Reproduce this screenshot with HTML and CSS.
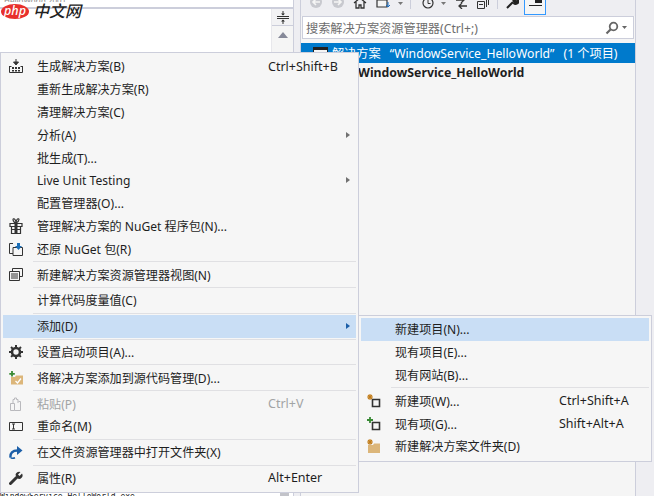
FILE: index.html
```html
<!DOCTYPE html>
<html lang="zh-CN">
<head>
<meta charset="utf-8">
<title>解决方案资源管理器</title>
<link rel="stylesheet" href="styles.css">
</head>
<body>
<div class="stage">
  <div class="left-pane">
    <div class="doc-top"><span class="top-clip">HelloWorld.2001</span></div>
    <div class="doc-body">
      <div class="doc-white"></div>
      <div class="vscroll">
        <div class="split"><svg width="12" height="13" viewBox="0 0 12 13"><path d="M0 5.500h12M0 7.500h12" stroke="#333" fill="none"/><path d="M6 0v4M6 9v4" stroke="#333"/><path d="M6 4.500L4 2.500h4zM6 8.500l-2 2h4z" fill="#333"/></svg></div>
        <div class="up"><svg width="10" height="6" viewBox="0 0 10 6"><path d="M5 0l5 6H0z" fill="#868999"/></svg></div>
      </div>
    </div>
    <div class="bottom-strip">
      <span class="clip-text">WindowService_HelloWorld.exe</span>
      <span class="thumb"></span>
    </div>
  </div>

  <div class="right-pane">
    <div class="toolbar">
      <svg class="tb" width="14" height="14" viewBox="0 0 14 14"><circle cx="7" cy="7" r="6" fill="#c8c9cf"/><path d="M11 7H4M7 4L4 7l3 3" stroke="#f5f5f5" stroke-width="1.600" fill="none"/></svg>
      <svg class="tb g8" width="14" height="14" viewBox="0 0 14 14"><circle cx="7" cy="7" r="6" fill="#c8c9cf"/><path d="M3 7h7M7 4l3 3-3 3" stroke="#f5f5f5" stroke-width="1.600" fill="none"/></svg>
      <svg class="tb g8" width="14" height="12" viewBox="0 0 14 12"><path d="M1 6l6-5 6 5M3 5v6h3V8h2v3h3V5" stroke="#333" stroke-width="1.300" fill="none"/></svg>
      <svg class="tb g9" width="15" height="12" viewBox="0 0 15 12"><path d="M1 1h10v9H1zM1 3h10" stroke="#333" stroke-width="1.200" fill="#f5f5f5"/><path d="M12 5v5M10 8l2 2 2-2" stroke="#1b6ec2" fill="none"/></svg>
      <svg class="tb caret g7" width="5" height="3" viewBox="0 0 5 3"><path d="M0 0h5L2.500 3z" fill="#777"/></svg>
      <span class="tb-sep g7"></span>
      <svg class="tb g12" width="12" height="12" viewBox="0 0 12 12"><circle cx="6" cy="6" r="5" stroke="#333" fill="none" stroke-width="1.200"/><path d="M6 3v3.500h2.500" stroke="#333" fill="none"/></svg>
      <svg class="tb caret g7" width="5" height="3" viewBox="0 0 5 3"><path d="M0 0h5L2.500 3z" fill="#777"/></svg>
      <svg class="tb g9" width="13" height="12" viewBox="0 0 13 12"><path d="M1 3h8M6 0l3 3-3 3M12 9H4M7 6L4 9l3 3" stroke="#333" fill="none" stroke-width="1.300"/></svg>
      <svg class="tb g9" width="12" height="9" viewBox="0 0 12 9"><path d="M.5 1.500h7v7h-7zM2 4.500h4M9.500 0v7M11.500 0v5" stroke="#333" fill="none"/></svg>
      <span class="tb-sep g8"></span>
      <svg class="tb g8" width="13" height="12" viewBox="0 0 13 12"><path d="M1 11l6-6M6 2.500a3 3 0 0 1 5-1L9 3.500l.5 1 1 .5 2-2a3 3 0 0 1-5 3" stroke="#222" stroke-width="2" fill="#222"/></svg>
      <span class="tb-active"><span class="pin"></span></span>
    </div>
    <div class="search">
      <span class="search-text">搜索解决方案资源管理器(Ctrl+;)</span>
      <svg width="14" height="14" viewBox="0 0 14 14"><circle cx="8.500" cy="5.500" r="3.800" stroke="#666" stroke-width="1.800" fill="none"/><path d="M6 8l-4.500 4.500" stroke="#666" stroke-width="2.200"/></svg>
      <svg width="5" height="3" viewBox="0 0 5 3"><path d="M0 0h5L2.500 3z" fill="#666"/></svg>
    </div>
    <div class="tree">
      <div class="sel-row"><span class="sol-icon"></span><span>解决方案<span class="qt">“WindowService_HelloWorld”</span>(1 个项目)</span></div>
      <div class="proj-row">WindowService_HelloWorld</div>
    </div>
  </div>
  <div class="edge"></div>

  <div class="logo"><span class="php">php</span><span class="cn">中文网</span></div>

  <div class="menu main-menu">
    <div class="item"><span class="ic"><svg width="14" height="14" viewBox="0 0 14 14"><path d="M7 0v5M4.500 3L7 6l2.500-3z" stroke="#333" fill="#333"/><path d="M.5 7.500h2M11.500 7.500h2M.5 7v6.500h13V7" stroke="#333" fill="none"/><path d="M3 8h2v2H3zM6 8h2v2H6zM9 8h2v2H9zM3 11h2v1.500H3zM6 11h2v1.500H6zM9 11h2v1.500H9z" fill="#333"/></svg></span><span class="lb">生成解决方案(B)</span><span class="sc">Ctrl+Shift+B</span></div>
    <div class="item"><span class="ic"></span><span class="lb">重新生成解决方案(R)</span></div>
    <div class="item"><span class="ic"></span><span class="lb">清理解决方案(C)</span></div>
    <div class="item"><span class="ic"></span><span class="lb">分析(A)</span><span class="sc"></span><span class="arr"></span></div>
    <div class="item"><span class="ic"></span><span class="lb">批生成(T)...</span></div>
    <div class="item"><span class="ic"></span><span class="lb">Live Unit Testing</span><span class="sc"></span><span class="arr"></span></div>
    <div class="item"><span class="ic"></span><span class="lb">配置管理器(O)...</span></div>
    <div class="item"><span class="ic"><svg width="14" height="16" viewBox="0 0 14 16"><path d="M1 5.500h12v3H1zM2.500 8.500h9v7h-9zM4 1.500c0-1.500 3-1 3 3.500 0-4.500 3-5 3-3.500S8 4.500 7 5 4 3 4 1.500z" stroke="#333" fill="none" stroke-width="1.200"/><path d="M5.500 5.500h3v10h-3zM2.500 11h9v1h-9z" fill="#333"/></svg></span><span class="lb">管理解决方案的 NuGet 程序包(N)...</span></div>
    <div class="item"><span class="ic"><svg width="14" height="14" viewBox="0 0 14 14"><path d="M4 1.500H.5v10H4M4 13.500V5.500h9.500v8z" stroke="#333" fill="none"/><path d="M8 1h3v3h2L9.500 8 6 4h2z" fill="#1c6fb7"/></svg></span><span class="lb">还原 NuGet 包(R)</span></div>
    <div class="sep"></div>
    <div class="item"><span class="ic"><svg width="14" height="13" viewBox="0 0 14 13"><path d="M3.500 3V.500h10v8H11" stroke="#333" fill="none"/><path d="M.5 3.500h10v9H.5z" stroke="#333" fill="#f5f5f5"/><path d="M2 6h7M2 8h7M2 10h7" stroke="#333"/></svg></span><span class="lb">新建解决方案资源管理器视图(N)</span></div>
    <div class="sep"></div>
    <div class="item"><span class="ic"></span><span class="lb">计算代码度量值(C)</span></div>
    <div class="sep"></div>
    <div class="item hot"><span class="ic"></span><span class="lb">添加(D)</span><span class="sc"></span><span class="arr dark"></span></div>
    <div class="sep"></div>
    <div class="item"><span class="ic"><svg width="14" height="14" viewBox="0 0 14 14"><circle cx="7" cy="7" r="4" stroke="#333" stroke-width="2.600" fill="none"/><path d="M7 0v14M0 7h14M2 2l10 10M12 2L2 12" stroke="#333" stroke-width="2" stroke-dasharray="3 8"/></svg></span><span class="lb">设置启动项目(A)...</span></div>
    <div class="sep"></div>
    <div class="item"><span class="ic"><svg width="15" height="14" viewBox="0 0 15 14"><path d="M2 6h4l1-1.500h7V13.500H2z" fill="#dcb67a"/><path d="M6.500 10l2 2 3.500-4.500" stroke="#fff" stroke-width="1.300" fill="none"/><path d="M3 0v5.500M.3 2.800h5.500" stroke="#388a34" stroke-width="1.800"/></svg></span><span class="lb">将解决方案添加到源代码管理(D)...</span></div>
    <div class="sep"></div>
    <div class="item off"><span class="ic"><svg width="13" height="14" viewBox="0 0 13 14"><path d="M.5 6.500h4v7h-4zM4.500 13.500h6V4.500h-2M3 6V2.500h1.500V1h2v1.500H8V6" stroke="#b9b9bd" fill="none"/></svg></span><span class="lb">粘贴(P)</span><span class="sc">Ctrl+V</span></div>
    <div class="item"><span class="ic"><svg width="14" height="9" viewBox="0 0 14 9"><path d="M.5.500h13v8H.5z" stroke="#333" fill="none"/><path d="M3 2h3M3 7h3M4.500 2v5" stroke="#333"/></svg></span><span class="lb">重命名(M)</span></div>
    <div class="sep"></div>
    <div class="item"><span class="ic"><svg width="14" height="13" viewBox="0 0 14 13"><path d="M1.500 11.500C1 7 3.500 4.500 8.500 4.500" stroke="#1c5fa8" stroke-width="2.400" fill="none"/><path d="M8 0l5.500 4.500L8 9z" fill="#1c5fa8"/><path d="M1.500 11.500c1 .8 3 1 4.500.3" stroke="#1c5fa8" stroke-width="1.600" fill="none"/></svg></span><span class="lb">在文件资源管理器中打开文件夹(X)</span></div>
    <div class="sep"></div>
    <div class="item"><span class="ic"><svg width="14" height="14" viewBox="0 0 14 14"><path d="M1.500 12.500L7.500 6.500" stroke="#333" stroke-width="3" stroke-linecap="round"/><path d="M6.500 4a3.500 3.500 0 0 1 5-3L9 3.500l1.500 1.500L13 2.500a3.500 3.500 0 0 1-4.500 5z" fill="#333"/></svg></span><span class="lb">属性(R)</span><span class="sc">Alt+Enter</span></div>
  </div>

  <div class="menu sub-menu">
    <div class="item hot"><span class="ic"></span><span class="lb">新建项目(N)...</span></div>
    <div class="item"><span class="ic"></span><span class="lb">现有项目(E)...</span></div>
    <div class="item"><span class="ic"></span><span class="lb">现有网站(B)...</span></div>
    <div class="sep"></div>
    <div class="item"><span class="ic"><svg width="14" height="14" viewBox="0 0 14 14"><path d="M5.500 5.500h7v7h-7z" stroke="#333" stroke-width="1.600" fill="none"/><path d="M3 0v6M0 3h6M1 1l4 4M5 1L1 5" stroke="#c27d1a" stroke-width="1.100"/></svg></span><span class="lb">新建项(W)...</span><span class="sc">Ctrl+Shift+A</span></div>
    <div class="item"><span class="ic"><svg width="14" height="14" viewBox="0 0 14 14"><path d="M5.500 5.500h7v7h-7z" stroke="#333" stroke-width="1.600" fill="none"/><path d="M3 0v6M0 3h6" stroke="#388a34" stroke-width="1.800"/></svg></span><span class="lb">现有项(G)...</span><span class="sc">Shift+Alt+A</span></div>
    <div class="item"><span class="ic"><svg width="14" height="14" viewBox="0 0 14 14"><path d="M1 6h5l1-1.500h6V14H1z" fill="#dcb67a"/><path d="M3 0v6M0 3h6M1 1l4 4M5 1L1 5" stroke="#c27d1a" stroke-width="1.100"/></svg></span><span class="lb">新建解决方案文件夹(D)</span></div>
  </div>
</div>
</body>
</html>
```

FILE: styles.css
```css
* { box-sizing: border-box; }
html, body { margin: 0; padding: 0; }
body {
  width: 654px;
  height: 496px;
  overflow: hidden;
  background: #eeeef2;
  font-family: "Noto Sans", "Noto Sans CJK SC", sans-serif;
  font-size: 12.1px;
  color: #1e1e1e;
}
.stage {
  position: relative;
  width: 654px;
  height: 496px;
  display: flex;
  overflow: hidden;
  background: #eeeef2;
}
.left-pane {
  width: 294px;
  height: 496px;
  display: flex;
  flex-direction: column;
  margin-right: 6px;
  background: #f5f5f5;
  border-right: 1px solid #ccCEDB;
}
.doc-top {
  height: 9px;
  background: #fff;
  border-bottom: 2px solid #ccCEDB;
  flex: none;
  overflow: hidden;
  padding-left: 4px;
}
.top-clip {
  display: block;
  font-size: 8px;
  line-height: 1px;
  height: 2px;
  overflow: hidden;
  color: #8a8a8a;
}
.doc-body { flex: 1; display: flex; background: #fff; }
.doc-white { flex: 1; }
.vscroll { width: 22px; background: #f5f5f5; border-left: 1px solid #e8e8ec; }
.split {
  height: 17px;
  display: flex;
  align-items: center;
  justify-content: center;
  border-bottom: 1px solid #ccCEDB;
  background: #f2f2f4;
}
.up { height: 18px; display: flex; align-items: center; justify-content: center; }
.bottom-strip {
  height: 4px;
  flex: none;
  display: flex;
  background: #fff;
  overflow: hidden;
}
.clip-text {
  flex: 1;
  height: 4px;
  font-family: "DejaVu Sans Mono", monospace;
  font-size: 8px;
  line-height: 10px;
  color: #222;
  overflow: hidden;
  white-space: nowrap;
}
.thumb { width: 9px; height: 4px; margin-right: 4px; background: #c2c3c9; }
.right-pane {
  width: 336px;
  height: 496px;
  flex: none;
  background: #f5f5f5;
  border-left: 1px solid #ccCEDB;
  border-right: 1px solid #ccCEDB;
  display: flex;
  flex-direction: column;
}
.edge { flex: 1; }
.toolbar {
  height: 16px;
  flex: none;
  display: flex;
  align-items: flex-end;
  background: #eeeef2;
  padding: 0 0 7px 8px;
  overflow: hidden;
}
.tb { flex: none; }
.caret { margin-bottom: 4px; }
.g7 { margin-left: 7px; }
.g8 { margin-left: 8px; }
.g9 { margin-left: 9px; }
.g12 { margin-left: 11px; }
.tb-sep { width: 1px; height: 10px; background: #ccCEDB; flex: none; }
.tb-active {
  width: 22px;
  height: 15px;
  margin-left: 5px;
  margin-bottom: -6px;
  border: 1px solid #3399ff;
  border-top: none;
  flex: none;
  display: flex;
  justify-content: center;
  background: #f5f5f5;
}
.pin {
  width: 13px;
  height: 6px;
  background: linear-gradient(90deg, #f5f5f5 45%, #222 45%) no-repeat;
  background-size: 100% 3px;
  border-bottom: 1px solid #222;
}
.search {
  height: 23px;
  flex: none;
  margin: 0 1px;
  background: #fff;
  border: 1px solid #ccCEDB;
  display: flex;
  align-items: center;
  padding-left: 3px;
  padding-right: 6px;
  gap: 3px;
  color: #6d6d6d;
  font-size: 12.2px;
}
.search-text { flex: 1; }
.tree { flex: 1; padding-top: 4px; }
.sel-row {
  height: 20px;
  background: #007acc;
  color: #fff;
  display: flex;
  align-items: center;
  gap: 4px;
  padding-left: 12px;
  font-size: 12.2px;
  white-space: pre;
}
.qt { margin: 0 9px; }
.sol-icon { width: 15px; height: 13px; border: 1.500px solid #222; border-top-width: 3px; background: #f5f5f5; }
.proj-row { height: 20px; padding-left: 57px; font-weight: 700; font-size: 12.3px; line-height: 20px; color: #1e1e1e; }
.logo {
  position: absolute;
  left: 1px;
  top: 3px;
  display: flex;
  align-items: center;
}
.php {
  width: 28px;
  height: 15px;
  border-radius: 50%;
  background: #e8302c;
  color: #fff;
  font-size: 12.500px;
  font-weight: 500;
  font-style: italic;
  line-height: 13px;
  text-align: center;
}
.cn {
  margin-left: 4px;
  font-size: 16px;
  line-height: 16px;
  font-style: italic;
  font-weight: 500;
  color: #222;
  text-shadow: 0 0 1px #fff;
}
.menu {
  position: absolute;
  background: #f6f6f6;
  border: 1px solid #ccCEDB;
  padding: 2px;
  display: flex;
  flex-direction: column;
}
.main-menu { left: 0; top: 52px; width: 359px; height: 441px; }
.sub-menu { left: 358px; top: 315px; width: 294px; height: 147px; }
.item {
  height: 22.800px;
  flex: none;
  display: grid;
  grid-template-columns: 34px 231px 78px 8px;
  align-items: center;
  white-space: nowrap;
}
.sub-menu .item { grid-template-columns: 34px 164px 92px; }
.ic { display: flex; justify-content: center; align-items: center; padding-right: 8px; }
.sc { font-size: 12.500px; }
.sep { height: 1px; margin: 1px 0 1px 30px; background: #e0e0e3; flex: none; }
.sub-menu .sep { margin-top: 1px; margin-bottom: 1px; }
.hot { background: #c9def5; }
.off { color: #a2a4a5; }
.arr {
  width: 0;
  height: 0;
  border-left: 4px solid #717171;
  border-top: 3.500px solid transparent;
  border-bottom: 3.500px solid transparent;
}
.arr.dark { border-left-color: #1c5fa8; }
```
